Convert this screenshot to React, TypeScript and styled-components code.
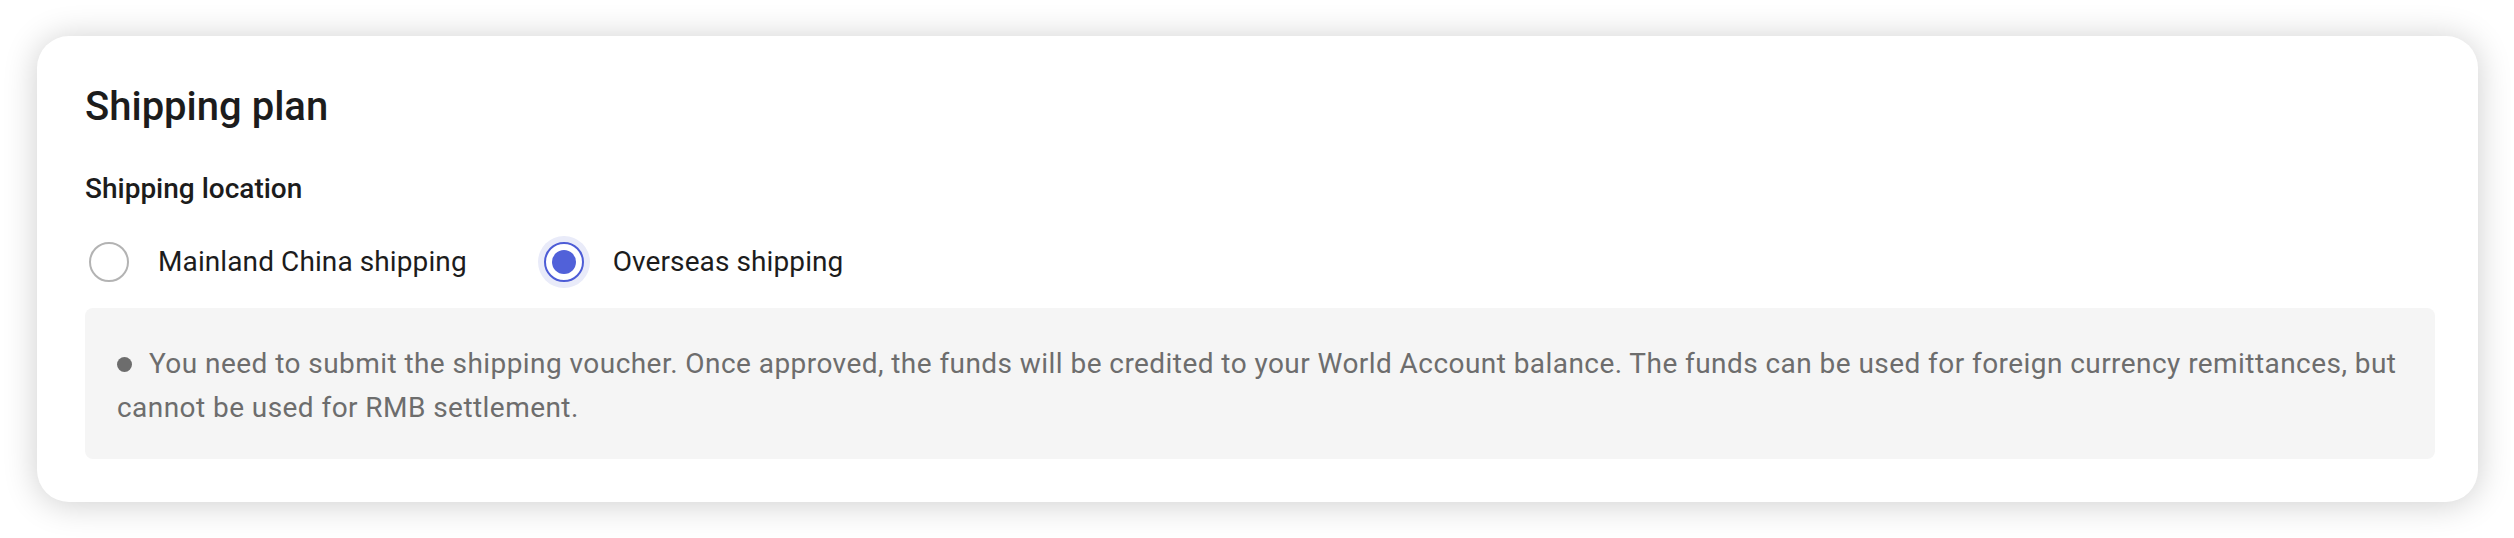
import React, { useState } from 'react';
import styled, { createGlobalStyle } from 'styled-components';

const GlobalStyle = createGlobalStyle`
  html, body {
    margin: 0;
    padding: 0;
    background: #fff;
    font-family: Roboto, "Noto Sans", sans-serif;
  }
`;

const Page = styled.div`
  padding: 36px 36px 36px 37px;
`;

const Card = styled.section`
  background: #fff;
  border-radius: 32px;
  box-shadow: 0 2px 34px rgba(0, 0, 0, 0.2);
  padding: 47px 43px 43px 48px;
`;

const Title = styled.h2`
  margin: 0;
  font-size: 40px;
  line-height: 48px;
  font-weight: 500;
  color: #1c1c1c;
`;

const Label = styled.div`
  margin-top: 38px;
  font-size: 28px;
  line-height: 40px;
  font-weight: 500;
  color: #1c1c1c;
`;

const RadioGroup = styled.div`
  display: flex;
  align-items: center;
  gap: 73px;
  margin-top: 27px;
  height: 52px;
`;

const Option = styled.label`
  display: flex;
  align-items: center;
  gap: 25px;
  cursor: pointer;
  font-size: 28px;
  line-height: 40px;
  letter-spacing: 0.1px;
  color: #1c1c1c;
`;

const RadioBox = styled.span`
  width: 48px;
  height: 48px;
  display: flex;
  align-items: center;
  justify-content: center;
`;

const RadioCircle = styled.span<{ $checked: boolean }>`
  box-sizing: border-box;
  width: 40px;
  height: 40px;
  border-radius: 50%;
  border: 2px solid ${(p) => (p.$checked ? '#4d5cd6' : '#b3b3b3')};
  box-shadow: ${(p) => (p.$checked ? '0 0 0 6px #e9ebf9' : 'none')};
  display: flex;
  align-items: center;
  justify-content: center;
  background: #fff;
`;

const RadioDot = styled.span`
  width: 24px;
  height: 24px;
  border-radius: 50%;
  background: #5161d9;
`;

const Notice = styled.div`
  margin-top: 20px;
  background: #f5f5f5;
  border-radius: 8px;
  padding: 34px 32px 29px;
  font-size: 28px;
  line-height: 44px;
  letter-spacing: 0.44px;
  color: #6d6d6d;
`;

const Bullet = styled.span`
  display: inline-block;
  width: 15px;
  height: 15px;
  border-radius: 50%;
  background: #6d6d6d;
  margin-right: 17px;
  vertical-align: 1px;
`;

const options = [
  { id: 'mainland', label: 'Mainland China shipping' },
  { id: 'overseas', label: 'Overseas shipping' },
];

export default function App() {
  const [location, setLocation] = useState('overseas');

  return (
    <Page>
      <GlobalStyle />
      <Card>
        <Title>Shipping plan</Title>
        <Label>Shipping location</Label>
        <RadioGroup>
          {options.map((o) => (
            <Option key={o.id} onClick={() => setLocation(o.id)}>
              <RadioBox>
                <RadioCircle $checked={location === o.id}>
                  {location === o.id && <RadioDot />}
                </RadioCircle>
              </RadioBox>
              {o.label}
            </Option>
          ))}
        </RadioGroup>
        <Notice>
          <Bullet />
          You need to submit the shipping voucher. Once approved, the funds will be
          credited to your World Account balance. The funds can be used for foreign
          currency remittances, but cannot be used for RMB settlement.
        </Notice>
      </Card>
    </Page>
  );
}
